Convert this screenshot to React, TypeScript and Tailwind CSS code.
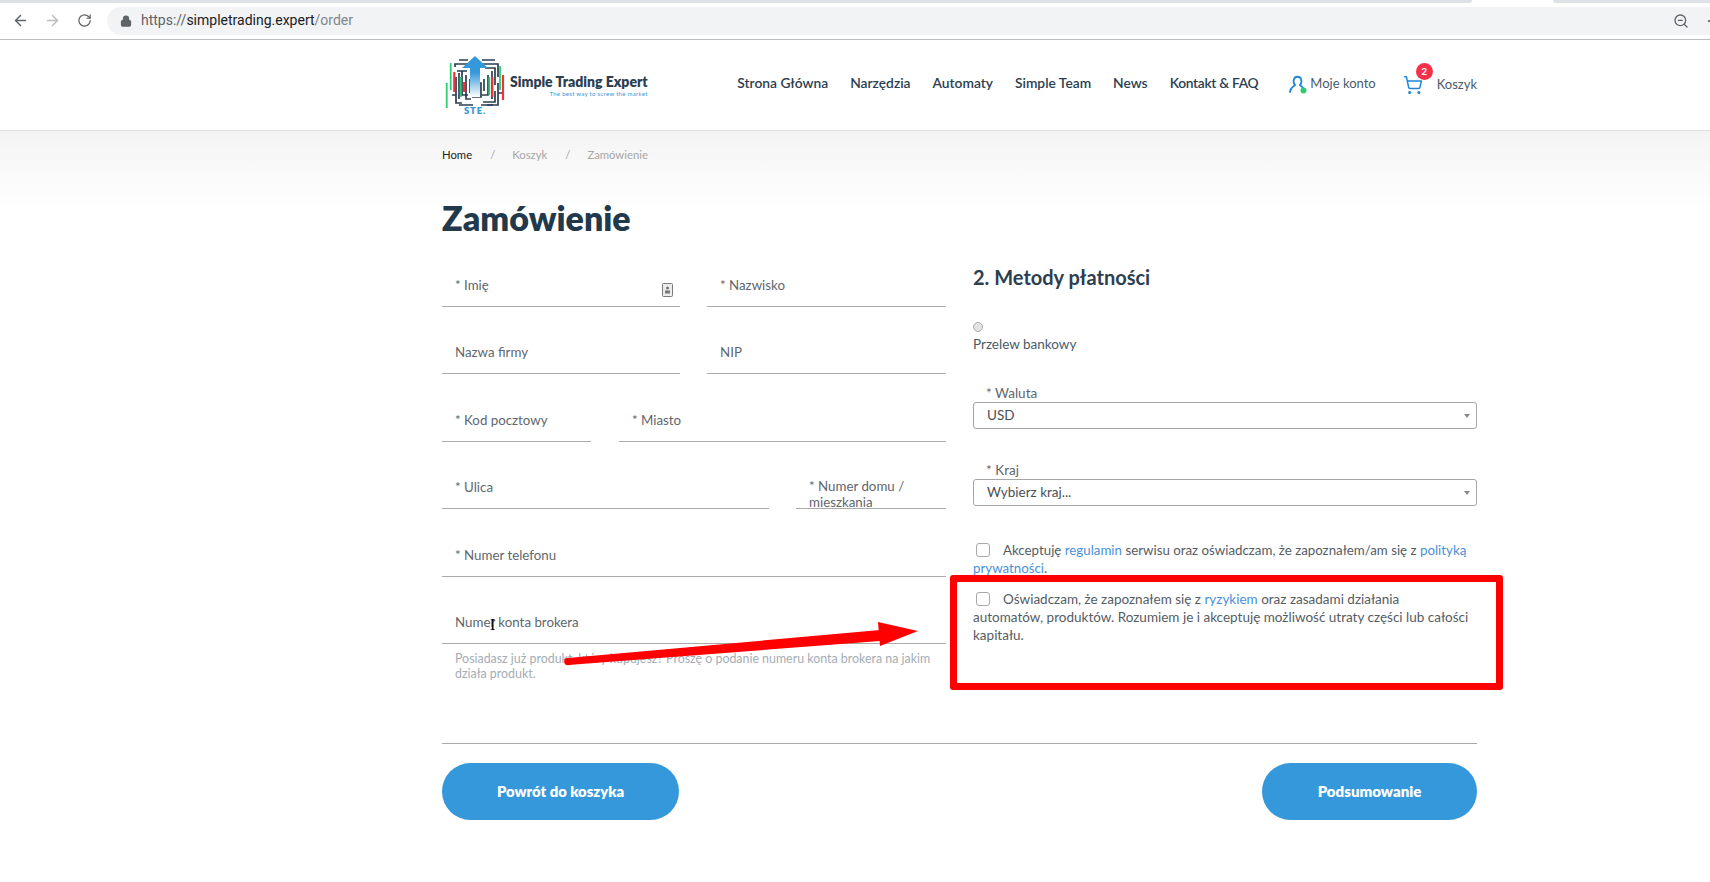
import React from "react";
import { ArrowLeft, ArrowRight, RotateCw, Lock, ZoomOut, ShoppingCart } from "lucide-react";

const FONT = "font-['Lato','Noto_Sans',sans-serif]";

function Logo() {
  return (
    <div className="ml-[3px] flex items-center">
      <svg width="64" height="60" viewBox="0 0 64 60" className="shrink-0">
        <defs>
          <linearGradient id="ar" x1="0" y1="0" x2="0" y2="1">
            <stop offset="0" stopColor="#3498db" />
            <stop offset="0.4" stopColor="#3498db" />
            <stop offset="1" stopColor="#ffffff" />
          </linearGradient>
        </defs>
        <g fill="none" stroke="#2c3e50" strokeWidth="1.7">
          <path d="M14 5H23M37 5H50" />
          <path d="M10 12V9H24M38 9H53V22" />
          <path d="M12 16H22M40 13H50V30" />
          <path d="M11 22V48H17M14 18V44" />
          <path d="M53 28V50H42M50 36V47H38" />
          <path d="M17 16V40H23M47 16V44" />
          <path d="M21 20V44H26M43 20V40H37" />
          <path d="M25 24V38M39 24V36" />
          <path d="M28 28H36V42H28Z" />
          <path d="M7 40H11M53 38H57" />
          <path d="M14 50H28M36 50H48" />
        </g>
        <g stroke="#2ecc71" strokeWidth="1.8">
          <path d="M5.700 8V35" />
          <path d="M1.700 28V53" />
          <path d="M15.700 22V42" />
          <path d="M44.300 22V40" />
          <path d="M55 11V35" />
        </g>
        <g stroke="#f0323c" strokeWidth="2.200">
          <path d="M9.300 17V37" />
          <path d="M19 27V37" />
          <path d="M47.300 22V42" />
          <path d="M58 20V45" />
        </g>
        <path d="M30 1L43 13H35V42H25V13H17Z" fill="url(#ar)" />
        <text x="30" y="59" textAnchor="middle" fontSize="9.500" fontWeight="800" letterSpacing="0.8" fill="#3498db" fontFamily="Lato, sans-serif">STE.</text>
      </svg>
      <div className="ml-px flex flex-col items-end">
        <span className="text-[14px] leading-[16px] font-extrabold text-[#2c3e50] whitespace-nowrap">Simple Trading Expert</span>
        <span className="text-[6px] leading-[7px] text-[#3498db] whitespace-nowrap tracking-[0.3px]">The best way to screw the market</span>
      </div>
    </div>
  );
}

function Field({ label, w, icon, wrapLabel }: { label: string; w: string; icon?: boolean; wrapLabel?: string }) {
  return (
    <div className={`${w} relative h-[45px] overflow-hidden border-b border-[#aaaaaa] pl-[13px] text-[13.3px] text-[#5f666d]`}>
      {wrapLabel ? (
        <div className="pt-[14px] leading-[16px]">
          {label}
          <br />
          {wrapLabel}
        </div>
      ) : (
        <div className="pt-[14px] leading-[18px]">{label}</div>
      )}
      {icon && (
        <svg width="11" height="14" viewBox="0 0 11 14" className="absolute right-[7px] top-[21px]">
          <rect x="0.500" y="0.500" width="10" height="13" rx="1" fill="#ececec" stroke="#7a7a7a" strokeWidth="1" />
          <circle cx="5.500" cy="5" r="1.500" fill="#777" />
          <rect x="3" y="7.500" width="5" height="3" fill="#777" />
        </svg>
      )}
    </div>
  );
}

function SelectBox({ value }: { value: string }) {
  return (
    <div className="flex h-[27px] items-center justify-between rounded-[3px] border border-[#a6a6a6] pl-[13px] pr-[6px] text-[13.5px] text-[#4a4f57]">
      <span>{value}</span>
      <span className="h-0 w-0 border-x-[3.5px] border-t-[4px] border-x-transparent border-t-[#888888]" />
    </div>
  );
}

function Box() {
  return <span className="inline-block h-[14px] w-[14px] shrink-0 rounded-[3px] border border-[#a9a9a9] bg-white align-[-2px]" />;
}

export default function App() {
  return (
    <div className={`${FONT} relative h-[882px] w-[1710px] overflow-hidden bg-white`}>
      {/* browser chrome */}
      <div className="flex h-[3px]">
        <div className="w-[1472px] rounded-br-[3px] bg-[#dee1e6]" />
        <div className="w-[81px] bg-white" />
        <div className="flex-1 rounded-bl-[3px] bg-[#dee1e6]" />
      </div>
      <div className="flex h-[37px] items-center border-b border-[#bdbdbd] bg-white pb-[1px]">
        <div className="flex w-[107px] items-center pl-[12px]">
          <ArrowLeft size={17} strokeWidth={2} className="text-[#5f6368]" />
          <ArrowRight size={17} strokeWidth={2} className="ml-[15px] text-[#b9bbbe]" />
          <RotateCw size={15} strokeWidth={2} className="ml-[16px] text-[#5f6368]" />
        </div>
        <div className="flex h-[28px] flex-1 items-center rounded-l-[14px] bg-[#f1f3f4] pl-[13px]">
          <Lock size={12} strokeWidth={2.5} fill="#5f6368" className="text-[#5f6368]" />
          <span className="ml-[9px] font-['Roboto',sans-serif] text-[14px] text-[#202124]">
            <span className="text-[#5f6368]">https://</span>simpletrading.expert<span className="text-[#80868b]">/order</span>
          </span>
          <ZoomOut size={16} strokeWidth={2} className="ml-auto mr-[19px] text-[#5f6368]" />
          <span className="h-[2px] w-[2px] bg-[#777777]" />
        </div>
      </div>

      {/* site header */}
      <header className="flex h-[91px] border-b border-[#dddddd] pl-[442px] pr-[233px]">
        <div className="flex w-full items-center">
          <Logo />
          <nav className="mb-[4px] ml-auto flex items-center gap-[22px] text-[13.8px] font-semibold text-[#2c3e50]">
            <span>Strona Główna</span>
            <span>Narzędzia</span>
            <span>Automaty</span>
            <span>Simple Team</span>
            <span>News</span>
            <span className="tracking-[-0.3px]">Kontakt &amp; FAQ</span>
          </nav>
          <div className="mb-[2px] ml-[30px] flex items-center text-[13px] text-[#4a5a6a]">
            <svg width="20" height="20" viewBox="0 0 20 20" className="relative shrink-0">
              <path d="M2 18c0-4 3-5 5-7-1.600-2-1.800-4-1-6 1-3 6-3 7 0 .8 2 .5 4-1 6 1 1 2 1.800 3 2.800" fill="none" stroke="#1e86d6" strokeWidth="1.800" strokeLinecap="round" />
              <circle cx="15.500" cy="16.500" r="3" fill="#2ecc71" />
            </svg>
            <span className="ml-[2px]">Moje konto</span>
          </div>
          <div className="relative ml-[27px] flex items-center text-[13px] text-[#4a5a6a]">
            <ShoppingCart size={20} strokeWidth={1.800} className="text-[#1e86d6]" />
            <span className="ml-[14px]">Koszyk</span>
            <span className="absolute left-[13px] top-[-12px] flex h-[17px] w-[17px] items-center justify-center rounded-full bg-[#f5304a] text-[10px] font-bold text-white">2</span>
          </div>
        </div>
      </header>

      <main className="relative bg-[linear-gradient(#f4f4f4,#ffffff_80px)] pl-[442px] pr-[233px]">
        <div className="flex h-[48px] items-center pt-[1px] text-[11.3px] text-[#a6a6a6]">
          <span className="text-[#222222]">Home</span>
          <span className="ml-[18px]">/</span>
          <span className="ml-[17px]">Koszyk</span>
          <span className="ml-[18px]">/</span>
          <span className="ml-[17px]">Zamówienie</span>
        </div>
        <h1 className="mt-[19px] text-[34px] leading-[40px] font-extrabold text-[#22394c]">Zamówienie</h1>

        <div className="mt-[24px] flex justify-between">
          <div className="flex w-[504px] flex-col">
            <div className="flex justify-between">
              <Field label="* Imię" w="w-[238px]" icon />
              <Field label="* Nazwisko" w="w-[239px]" />
            </div>
            <div className="mt-[22px] flex justify-between">
              <Field label="Nazwa firmy" w="w-[238px]" />
              <Field label="NIP" w="w-[239px]" />
            </div>
            <div className="mt-[23px] flex justify-between">
              <Field label="* Kod pocztowy" w="w-[149px]" />
              <Field label="* Miasto" w="w-[327px]" />
            </div>
            <div className="mt-[22px] flex justify-between">
              <Field label="* Ulica" w="w-[327px]" />
              <Field label="* Numer domu /" wrapLabel="mieszkania" w="w-[150px]" />
            </div>
            <div className="mt-[23px]">
              <Field label="* Numer telefonu" w="w-full" />
            </div>
            <div className="mt-[22px]">
              <Field label="Numer konta brokera" w="w-full" />
            </div>
            <p className="mt-[7px] pl-[13px] text-[12.4px] leading-[15px] text-[#a4adb5]">
              Posiadasz już produkt, który kupujesz? Proszę o podanie numeru konta brokera na jakim działa produkt.
            </p>
          </div>

          <div className="flex w-[504px] flex-col">
            <h2 className="mt-[3px] text-[20px] leading-[24px] font-bold text-[#2c3e50]">2. Metody płatności</h2>
            <span className="mt-[33px] block h-[10px] w-[10px] rounded-full border border-[#aaaaaa] bg-[#e4e4e4]" />
            <div className="mt-[3px] text-[13.5px] leading-[18px] text-[#4a5a6a]">Przelew bankowy</div>
            <div className="mt-[33px] pl-[13px] text-[13.5px] leading-[14px] text-[#5f666d]">* Waluta</div>
            <div className="mt-[2px]">
              <SelectBox value="USD" />
            </div>
            <div className="mt-[34px] pl-[13px] text-[13.5px] leading-[14px] text-[#5f666d]">* Kraj</div>
            <div className="mt-[2px]">
              <SelectBox value="Wybierz kraj..." />
            </div>
            <div className="mt-[35px] text-[13.3px] leading-[18px] text-[#555c63]">
              <div className="indent-[3px]">
                <Box />
                <span className="ml-[13px]">Akceptuję </span>
                <span className="text-[#4a90d9]">regulamin</span> serwisu oraz oświadczam, że zapoznałem/am się z{" "}
                <span className="text-[#4a90d9]">polityką prywatności</span>.
              </div>
            </div>
            <div className="mt-[13px] text-[13.5px] leading-[18px] text-[#555c63]">
              <div className="indent-[3px]">
                <Box />
                <span className="ml-[13px]">Oświadczam, że zapoznałem się z </span>
                <span className="text-[#4a90d9]">ryzykiem</span> oraz zasadami działania
                <br />
                automatów, produktów. Rozumiem je i akceptuję możliwość utraty części lub całości
                <br />
                kapitału.
              </div>
            </div>
          </div>
        </div>

        <div className="mt-[62px] border-t border-[#aaaaaa]" />
        <div className="mt-[19px] flex justify-between">
          <button className="h-[57px] w-[237px] rounded-[29px] bg-[#3498db] text-[14.8px] font-extrabold text-white">Powrót do koszyka</button>
          <button className="h-[57px] w-[215px] rounded-[29px] bg-[#3498db] text-[15px] font-extrabold text-white">Podsumowanie</button>
        </div>
      </main>

      {/* annotations laid over the screenshot */}
      <div className="pointer-events-none absolute left-[950px] top-[575px] h-[115px] w-[553px] rounded-[3px] border-[7px] border-[#ff0000]" />
      <span className="pointer-events-none absolute left-[490px] top-[616px] font-['Liberation_Serif',serif] text-[16px] leading-[18px] text-black">I</span>
      <svg width="360" height="54" viewBox="0 0 360 54" className="pointer-events-none absolute left-[560px] top-[615px]">
        <polygon points="8,43 320,15 320,26 8,50" fill="#ff0000" />
        <circle cx="8" cy="46.500" r="3.800" fill="#ff0000" />
        <polygon points="318,7 358,16 320,31" fill="#ff0000" />
      </svg>
    </div>
  );
}
